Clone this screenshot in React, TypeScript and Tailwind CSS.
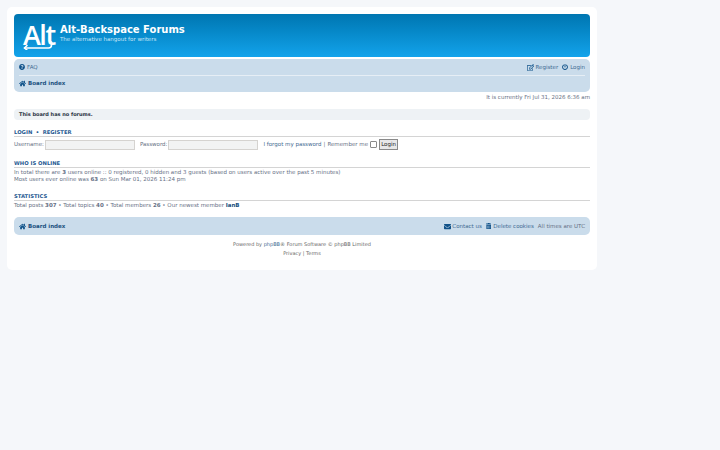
import { FaEnvelope, FaHome, FaPowerOff, FaQuestionCircle, FaRegEdit, FaTrashAlt } from 'react-icons/fa';

const Logo = () => (
  <div className="relative w-[30px] h-[27px] mt-[9px]">
    <span className="block text-[27px] leading-[24px] text-white font-['Open_Sans',sans-serif] font-semibold tracking-[-1.500px]">Alt</span>
    <svg viewBox="0 0 30 27" className="absolute inset-0 w-[30px] h-[27px]" fill="none" stroke="#fff" strokeWidth="1.600" strokeLinecap="round" strokeLinejoin="round">
      <path d="M28.500 19v3q0 3-3 3H1.500" />
      <path d="M4 22.500L1.500 25 4 27" />
    </svg>
  </div>
);

const SectionTitle = ({ children }: { children: React.ReactNode }) => (
  <h3 className="h-[9px] border-b border-[#d4d4d4] text-[5.250px] leading-[8px] font-bold uppercase text-[#1f5a92]">
    {children}
  </h3>
);

const App = () => {
  return (
    <div className="min-h-[450px] bg-[#f5f7fa] pt-[7px] pl-[7px] font-['DejaVu_Sans',sans-serif] text-[5.500px] text-[#667085]">
      <div className="w-[590px] h-[263px] bg-white rounded-[5px] px-[7px] pt-[7px]">
        {/* Header */}
        <div className="h-[43px] rounded-[4px] bg-gradient-to-b from-[#0076b1] to-[#12a3eb] flex pl-[9px] text-white">
          <Logo />
          <div className="ml-[7px] mt-[10px]">
            <h1 className="text-[10px] leading-[12px] font-bold">Alt-Backspace Forums</h1>
            <p className="text-[5.500px] leading-[6px] text-[#c8e6f7]">The alternative hangout for writers</p>
          </div>
        </div>

        {/* Nav */}
        <div className="mt-[2px] h-[33px] rounded-[5px] bg-[#cadceb] px-[5px]">
          <div className="h-[17px] flex items-center justify-between border-b border-[#e6eef5] text-[#3f6a92]">
            <span className="flex items-center gap-[2px]">
              <FaQuestionCircle className="w-[6px] h-[6px] text-[#105289]" />
              FAQ
            </span>
            <span className="flex items-center gap-[4px]">
              <span className="flex items-center gap-[1.500px]">
                <FaRegEdit className="w-[7.500px] h-[7px] text-[#105289]" />
                Register
              </span>
              <span className="flex items-center gap-[2px]">
                <FaPowerOff className="w-[6px] h-[6px] text-[#105289]" />
                Login
              </span>
            </span>
          </div>
          <div className="h-[15px] flex items-center gap-[2px] font-bold text-[#20507e]">
            <FaHome className="w-[7px] h-[7px] text-[#105289]" />
            Board index
          </div>
        </div>

        <p className="text-right leading-[8px] mt-[1px]">It is currently Fri Jul 31, 2026 6:36 am</p>

        {/* Notice */}
        <div className="mt-[8px] h-[11px] rounded-[4px] bg-[#eef2f5] px-[5px] flex items-center text-[5px] font-bold text-[#28313f]">
          This board has no forums.
        </div>

        {/* Login */}
        <div className="mt-[8px]">
          <SectionTitle>
            <span>Login</span>
            <span className="mx-[3.500px]">•</span>
            <span>Register</span>
          </SectionTitle>
          <div className="flex items-center h-[11px] mt-[2px]">
            <span>Username:</span>
            <span className="ml-[1px] w-[90px] h-[10px] bg-[#f2f3f3] border border-[#d5d3d0]" />
            <span className="ml-[5px]">Password:</span>
            <span className="ml-[1px] w-[90px] h-[10px] bg-[#f2f3f3] border border-[#d5d3d0]" />
            <span className="ml-[5px] text-[#3f6a92]">I forgot my password</span>
            <span className="mx-[2px]">|</span>
            <span>Remember me</span>
            <span className="ml-[2px] w-[7px] h-[7px] bg-white border border-[#8a8a8a] rounded-[1px]" />
            <span className="ml-[2px] w-[19px] h-[11px] bg-[#e8e8e8] border border-[#8a8a8a] flex items-center justify-center text-[#222222]">Login</span>
          </div>
        </div>

        {/* Online */}
        <div className="mt-[9px]">
          <SectionTitle>Who is online</SectionTitle>
          <p className="leading-[7px] mt-[1px]">
            In total there are <b>3</b> users online :: 0 registered, 0 hidden and 3 guests (based on users active over the past 5 minutes)
          </p>
          <p className="leading-[7px]">
            Most users ever online was <b>63</b> on Sun Mar 01, 2026 11:24 pm
          </p>
        </div>

        {/* Statistics */}
        <div className="mt-[9px]">
          <SectionTitle>Statistics</SectionTitle>
          <p className="leading-[7px] mt-[1px]">
            Total posts <b>307</b> • Total topics <b>40</b> • Total members <b>26</b> • Our newest member <b className="text-[#20507e]">IanB</b>
          </p>
        </div>

        {/* Footer nav */}
        <div className="mt-[8px] h-[18px] rounded-[5px] bg-[#cadceb] px-[5px] flex items-center justify-between text-[#3f6a92]">
          <span className="flex items-center gap-[2px] font-bold text-[#20507e]">
            <FaHome className="w-[7px] h-[7px] text-[#105289]" />
            Board index
          </span>
          <span className="flex items-center gap-[4px]">
            <span className="flex items-center gap-[1.500px]">
              <FaEnvelope className="w-[7px] h-[7px] text-[#105289]" />
              Contact us
            </span>
            <span className="flex items-center gap-[2px]">
              <FaTrashAlt className="w-[5.500px] h-[6.500px] text-[#105289]" />
              Delete cookies
            </span>
            <span className="text-[#667085]">All times are UTC</span>
          </span>
        </div>

        {/* Copyright */}
        <div className="mt-[5px] text-center text-[#666666] text-[5px]">
          <p className="leading-[9px]">
            Powered by <span className="text-[#3f6a92]">phpBB</span>® Forum Software © phpBB Limited
          </p>
          <p className="leading-[9px]">Privacy | Terms</p>
        </div>
      </div>
    </div>
  );
};

export default App;
